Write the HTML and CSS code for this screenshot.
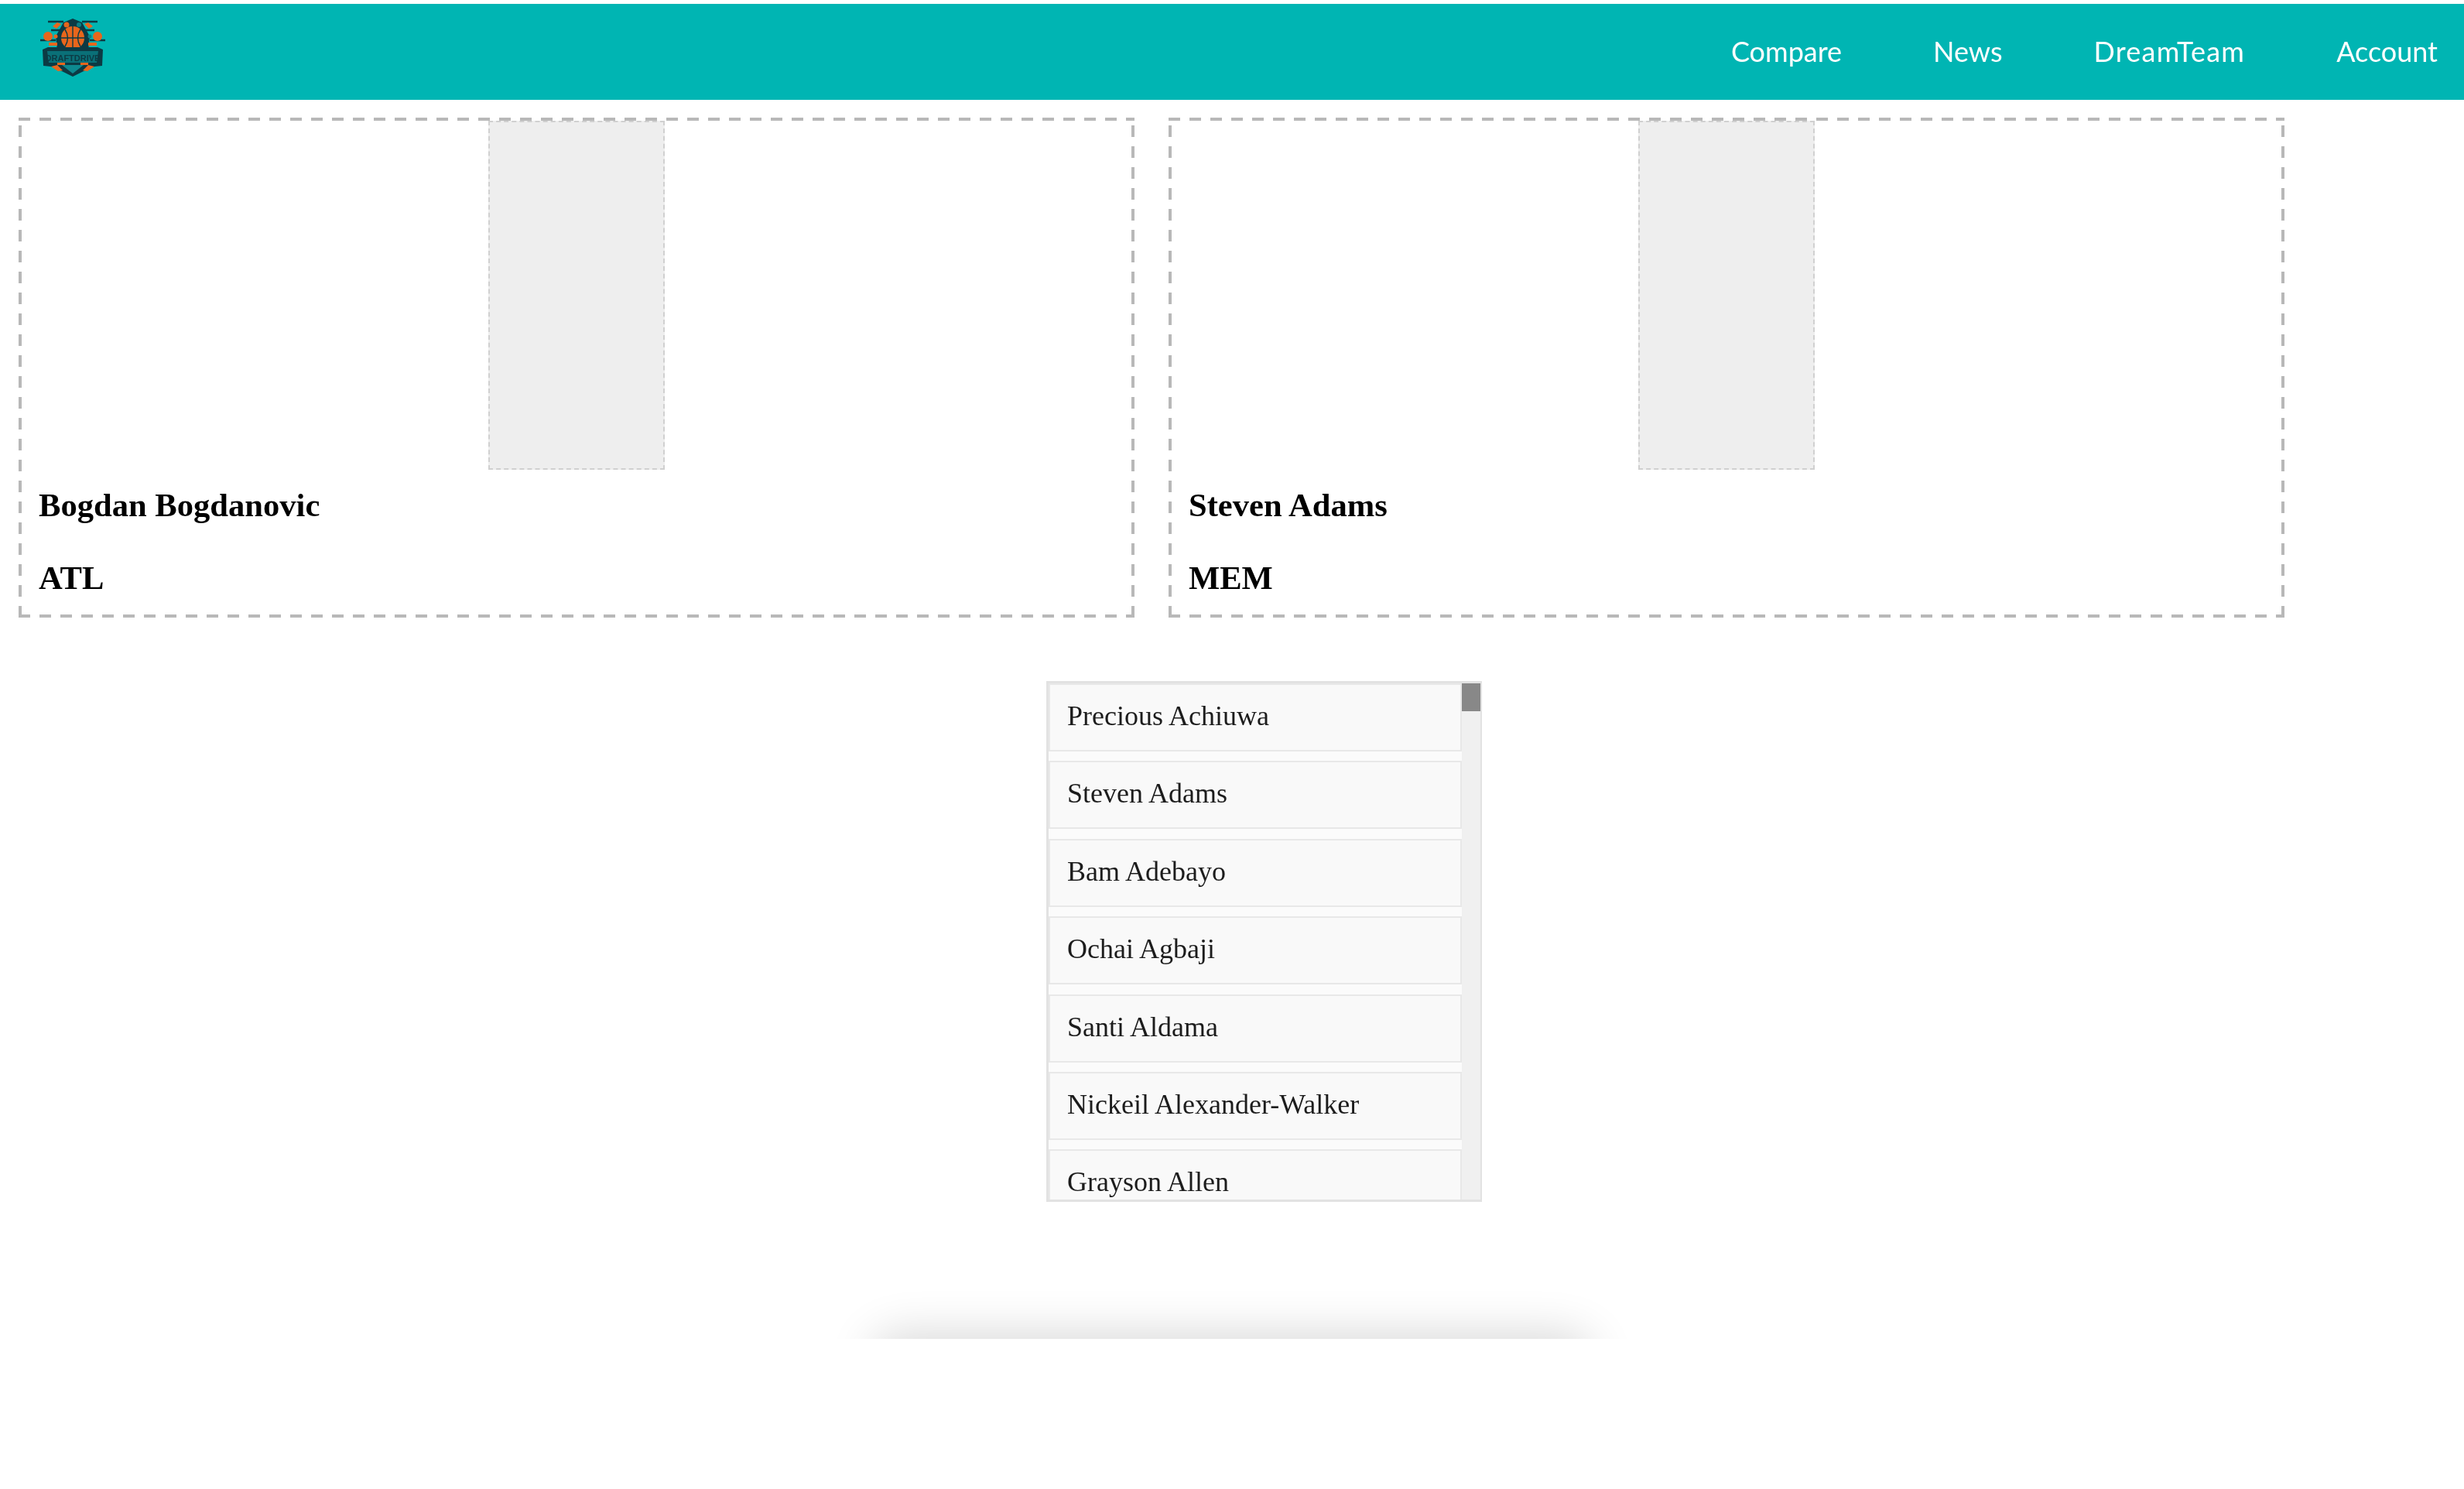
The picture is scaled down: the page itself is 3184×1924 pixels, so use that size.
FILE: index.html
```html
<!DOCTYPE html>
<html lang="en">
<head>
<meta charset="utf-8">
<title>DraftDrive – Compare</title>
<link rel="stylesheet" href="styles.css">
</head>
<body>
<nav class="navbar">
  <a class="logo" href="#" aria-label="DraftDrive">
    <svg class="logo-svg" viewBox="0 0 84 78" width="84" height="78">
      <g fill="none" stroke="#0c3a44" stroke-width="2.5">
        <path d="M10 5h20M54 5h20M14 16h16M54 16h16M0 29h20M64 29h20"/>
      </g>
      <path d="M20 24 L30 6 L42 1 L54 6 L64 24 L62 42 L22 42Z" fill="#0c3a44"/>
      <path d="M16 11l6 -5 5 2 -6 6zM68 11l-6 -5 -5 2 6 6z" fill="#e8661c"/>
      <circle cx="34" cy="9" r="3.5" fill="#e8661c"/>
      <circle cx="50" cy="9" r="3" fill="#0d7f86"/>
      <circle cx="10" cy="24" r="6" fill="#e8661c"/>
      <circle cx="74" cy="24" r="6" fill="#e8661c"/>
      <circle cx="20" cy="24" r="2.5" fill="#e8661c"/>
      <circle cx="64" cy="24" r="2.5" fill="#0d7f86"/>
      <path d="M11 32h11v4H11zM62 32h11v4H62z" fill="#e8661c"/>
      <circle cx="42" cy="26" r="15" fill="#e8661c"/>
      <path d="M42 11v30M27 26h30M32 15q7 11 0 22M52 15q-7 11 0 22" fill="none" stroke="#0c3a44" stroke-width="1.4"/>
      <path d="M3 41 L10 38 H74 L81 41 L80 62 L70 63 L58 68 L42 76 L26 68 L14 63 L4 62Z" fill="#0c3a44"/>
      <path d="M9 43 H75 L73 58 H11Z" fill="#0a7078"/>
      <text class="logo-word" x="42" y="56" text-anchor="middle">DRAFTDRIVE</text>
      <path d="M14 63l8 -2 7 7 -6 1zM70 63l-8 -2 -7 7 6 1z" fill="#e8661c"/>
      <path d="M28 61H56L42 72Z" fill="#0d8a90"/>
      <path d="M22 58h10v3H22zM52 58h10v3H52z" fill="#e8661c"/>
    </svg>
  </a>
  <ul class="nav-links">
    <li><a href="#">Compare</a></li>
    <li><a href="#">News</a></li>
    <li><a class="nav-wide" href="#">DreamTeam</a></li>
    <li><a href="#">Account</a></li>
  </ul>
</nav>

<main>
  <section class="compare">
    <article class="player-card">
      <div class="photo"></div>
      <h3>Bogdan Bogdanovic</h3>
      <h3>ATL</h3>
    </article>
    <article class="player-card">
      <div class="photo"></div>
      <h3>Steven Adams</h3>
      <h3>MEM</h3>
    </article>
  </section>

  <section class="picker-wrap">
    <div class="picker">
      <ul class="picker-list">
        <li class="picker-item">Precious Achiuwa</li>
        <li class="picker-item">Steven Adams</li>
        <li class="picker-item">Bam Adebayo</li>
        <li class="picker-item">Ochai Agbaji</li>
        <li class="picker-item">Santi Aldama</li>
        <li class="picker-item">Nickeil Alexander-Walker</li>
        <li class="picker-item">Grayson Allen</li>
      </ul>
      <div class="scrollbar"><div class="scrollbar-thumb"></div></div>
    </div>
  </section>

  <div class="fade"><div class="fade-shadow"></div></div>
</main>
</body>
</html>
```
FILE: styles.css
```css
* { box-sizing: border-box; }

body {
  margin: 0;
  background: #fff;
  color: #000;
  font-family: "Liberation Serif", serif;
  overflow: hidden;
  filter: blur(0.6px);
}

.navbar {
  margin-top: 5px;
  height: 124px;
  background: #00b5b3;
  display: flex;
  align-items: center;
  justify-content: space-between;
  padding: 0 34px 0 52px;
  font-family: Lato, sans-serif;
}

.logo { display: block; align-self: flex-start; margin-top: 18px; }
.logo-svg { display: block; filter: blur(0.5px); }
.logo-word { font-family: "Liberation Sans", sans-serif; font-size: 11px; font-weight: 700; fill: #0c3a44; }

.nav-links {
  list-style: none;
  margin: -3px 0 0;
  padding: 0;
  display: flex;
  gap: 118px;
}

.nav-links a {
  color: #fff;
  text-decoration: none;
  font-size: 36px;
}

.nav-links .nav-wide { letter-spacing: 1.2px; }

.compare {
  display: flex;
  gap: 44px;
  padding: 23px 0 0 24px;
}

.player-card {
  width: 1442px;
  height: 646px;
  padding: 4px 26px 0;
  background:
    repeating-linear-gradient(90deg, #b8b8b8 0 15px, transparent 15px 27px) left top / 100% 4px no-repeat,
    repeating-linear-gradient(90deg, #b8b8b8 0 15px, transparent 15px 27px) left bottom / 100% 4px no-repeat,
    repeating-linear-gradient(0deg, #b8b8b8 0 15px, transparent 15px 27px) left top / 4px 100% no-repeat,
    repeating-linear-gradient(0deg, #b8b8b8 0 15px, transparent 15px 27px) right top / 4px 100% no-repeat;
}

.photo {
  width: 228px;
  height: 451px;
  margin: 0 auto;
  background: #eee;
  border: 2px dashed #d0d0d0;
}

.player-card h3 {
  margin: 12px 0 0;
  font-size: 42.6px;
  font-weight: 700;
  line-height: 68px;
}

.player-card h3 + h3 { margin-top: 26px; }

.picker-wrap {
  display: flex;
  justify-content: center;
  padding: 82px 0 0 83px;
}

.picker {
  width: 563px;
  height: 673px;
  overflow: hidden;
  display: flex;
  border: 3px solid #e2e2e2;
  border-right-width: 2px;
  background: #fbfbfb;
}

.picker-list {
  list-style: none;
  margin: 0;
  padding: 0;
  flex: 1;
  display: flex;
  flex-direction: column;
  gap: 12.4px;
}

.picker-item {
  flex: none;
  height: 88px;
  padding: 0 22px;
  border: 2px solid #e8e8e8;
  background: #f9f9f9;
  color: #1c1c1c;
  font-size: 36px;
  line-height: 81px;
}

.scrollbar {
  flex: none;
  width: 24px;
  background: #f0f0f0;
}

.scrollbar-thumb {
  height: 36px;
  background: #888;
}

.fade {
  width: 1060px;
  height: 85px;
  margin: 92px auto 0;
  overflow: hidden;
}

.fade-shadow {
  height: 60px;
  margin: 85px 70px 0;
  border-radius: 30px;
  box-shadow: 0 0 60px 6px rgba(0, 0, 0, 0.16);
}
```
